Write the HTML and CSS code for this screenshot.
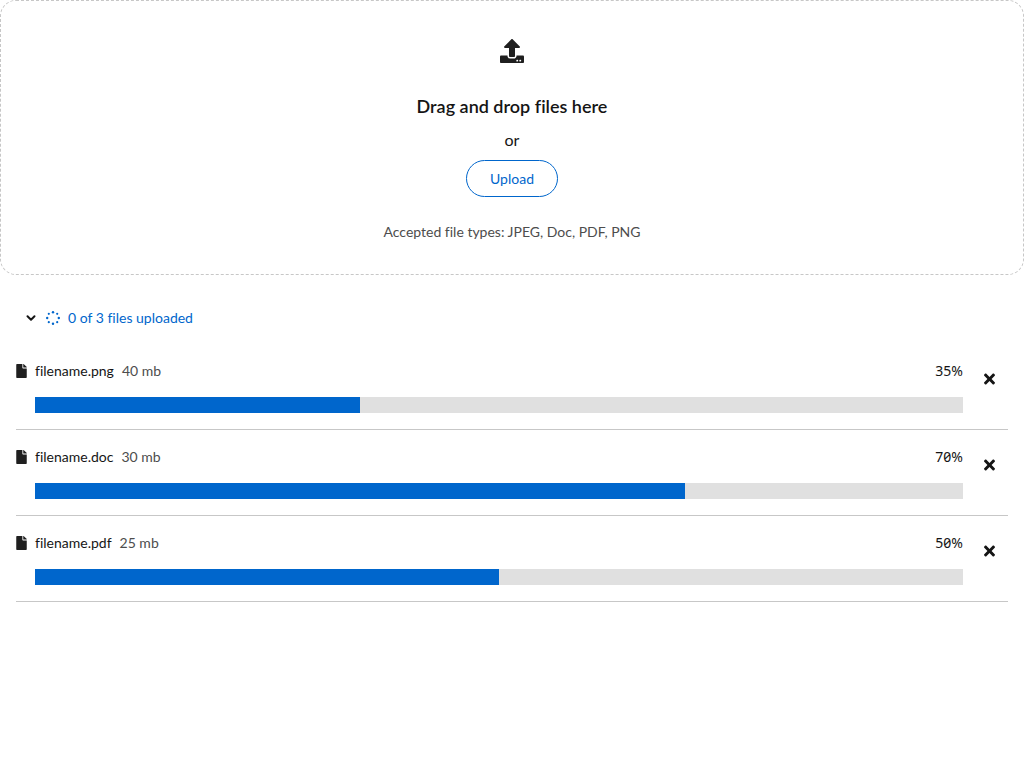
FILE: index.html
```html
<!DOCTYPE html>
<html lang="en">
<head>
<meta charset="utf-8">
<meta name="viewport" content="width=device-width, initial-scale=1">
<title>Multiple file upload</title>
<link rel="stylesheet" href="styles.css">
</head>
<body>
<svg class="sprite" aria-hidden="true">
  <symbol id="file" viewBox="0 0 384 512"><path d="M224 136V0H24C10.7 0 0 10.7 0 24v464c0 13.3 10.7 24 24 24h336c13.3 0 24-10.7 24-24V160H248c-13.2 0-24-10.8-24-24zm160-14.1v6.1H256V0h6.1c6.4 0 12.5 2.5 17 7l97.9 98c4.5 4.5 7 10.6 7 16.9z"/></symbol>
  <symbol id="times" viewBox="0 0 352 512"><path d="M242.72 256l100.07-100.07c12.28-12.28 12.28-32.19 0-44.48l-22.24-22.24c-12.28-12.28-32.19-12.28-44.48 0L176 189.28 75.93 89.21c-12.28-12.28-32.19-12.28-44.48 0L9.21 111.45c-12.28 12.28-12.28 32.19 0 44.48L109.28 256 9.21 356.07c-12.28 12.28-12.28 32.19 0 44.48l22.24 22.24c12.28 12.28 32.2 12.28 44.48 0L176 322.72l100.07 100.07c12.28 12.28 32.2 12.28 44.48 0l22.24-22.24c12.28-12.28 12.28-32.19 0-44.48L242.72 256z"/></symbol>
</svg>
<main>
  <section class="dropzone">
    <svg class="upload-icon" viewBox="0 0 512 512" aria-hidden="true"><path d="M296 384h-80c-13.3 0-24-10.7-24-24V192h-87.7c-17.8 0-26.7-21.5-14.1-34.1L242.3 5.7c7.5-7.5 19.8-7.5 27.3 0l152.2 152.2c12.6 12.6 3.7 34.1-14.1 34.1H320v168c0 13.3-10.7 24-24 24zm216-8v112c0 13.3-10.7 24-24 24H24c-13.3 0-24-10.7-24-24V376c0-13.3 10.7-24 24-24h136v8c0 30.9 25.1 56 56 56h80c30.9 0 56-25.1 56-56v-8h136c13.3 0 24 10.7 24 24zm-124 88c0-11-9-20-20-20s-20 9-20 20 9 20 20 20 20-9 20-20zm64 0c0-11-9-20-20-20s-20 9-20 20 9 20 20 20 20-9 20-20z"/></svg>
    <h1 class="title">Drag and drop files here</h1>
    <p class="separator">or</p>
    <button class="upload" type="button">Upload</button>
    <p class="hint">Accepted file types: JPEG, Doc, PDF, PNG</p>
  </section>
  <section class="status">
    <button class="toggle" type="button" aria-expanded="true">
      <svg class="chevron" viewBox="0 0 10 14" aria-hidden="true"><path d="M1.5 5.3 5 8.7l3.500-3.400"/></svg>
      <svg class="pending" viewBox="0 0 14 14" aria-hidden="true"><circle cx="7" cy="1.200" r="1.200"/><circle cx="11.200" cy="2.800" r="1.100"/><circle cx="12.800" cy="7" r="1.200"/><circle cx="11.200" cy="11.200" r="1.100"/><circle cx="7" cy="12.800" r="1.200"/><circle cx="2.800" cy="11.200" r="1.100"/><circle cx="1.200" cy="7" r="1.200"/><circle cx="2.800" cy="2.800" r="1.100"/></svg>
      <span>0 of 3 files uploaded</span>
    </button>
    <ul class="files">
      <li class="file">
        <svg class="file-icon" aria-hidden="true"><use href="#file"/></svg>
        <div class="file-main">
          <div class="file-header"><label class="name" for="p1">filename.png</label><span class="size">40 mb</span><span class="percent">35%</span></div>
          <progress class="bar" id="p1" max="100" value="35"></progress>
        </div>
        <button class="remove" type="button" aria-label="Remove filename.png"><svg class="times" aria-hidden="true"><use href="#times"/></svg></button>
      </li>
      <li class="file">
        <svg class="file-icon" aria-hidden="true"><use href="#file"/></svg>
        <div class="file-main">
          <div class="file-header"><label class="name" for="p2">filename.doc</label><span class="size">30 mb</span><span class="percent">70%</span></div>
          <progress class="bar" id="p2" max="100" value="70"></progress>
        </div>
        <button class="remove" type="button" aria-label="Remove filename.doc"><svg class="times" aria-hidden="true"><use href="#times"/></svg></button>
      </li>
      <li class="file">
        <svg class="file-icon" aria-hidden="true"><use href="#file"/></svg>
        <div class="file-main">
          <div class="file-header"><label class="name" for="p3">filename.pdf</label><span class="size">25 mb</span><span class="percent">50%</span></div>
          <progress class="bar" id="p3" max="100" value="50"></progress>
        </div>
        <button class="remove" type="button" aria-label="Remove filename.pdf"><svg class="times" aria-hidden="true"><use href="#times"/></svg></button>
      </li>
    </ul>
  </section>
</main>
</body>
</html>
```
FILE: styles.css
```css
* { box-sizing: border-box; }

body {
  margin: 0;
  background: #fff;
  color: #151515;
  font: 14px/21px Lato, "Noto Sans", sans-serif;
  font-variant-ligatures: none;
}

h1, p, ul { margin: 0; padding: 0; }
button { font: inherit; font-variant-ligatures: none; cursor: pointer; }
svg { fill: currentColor; flex: none; }
.sprite { position: absolute; width: 0; height: 0; }

.dropzone {
  display: flex;
  flex-direction: column;
  align-items: center;
  padding: 38px 32px 32px;
  border: 1px dashed #c7c7c7;
  border-radius: 16px;
  text-align: center;
}

.upload-icon { width: 24px; height: 24px; color: #1f1f1f; }
.title { margin-top: 32px; font-size: 18px; line-height: 23px; font-weight: 600; }
.separator { margin-top: 10px; font-size: 16px; line-height: 24px; }

.upload {
  margin-top: 8px;
  padding: 7px 23px;
  border: 1px solid #06c;
  border-radius: 20px;
  background: none;
  color: #06c;
}

.hint { margin-top: 24px; color: #4d4d4d; }

.status { padding: 24px 16px; }

.toggle {
  display: flex;
  align-items: center;
  gap: 8px;
  padding: 8px 10px;
  border: 0;
  background: none;
  color: #06c;
}

.chevron {
  width: 10px;
  height: 14px;
  margin-right: 2px;
  fill: none;
  stroke: #151515;
  stroke-width: 2;
  stroke-linecap: round;
  stroke-linejoin: round;
}
.pending { width: 14px; height: 14px; }

.files { margin-top: 8px; list-style: none; }

.file {
  display: flex;
  align-items: flex-start;
  gap: 8px;
  padding: 16px 0;
  border-bottom: 1px solid #c7c7c7;
}

.file-icon { width: 11px; height: 14px; margin-top: 4px; color: #1f1f1f; }
.file-main { flex: 1; min-width: 0; }
.file-header { display: flex; gap: 8px; }
.size { color: #4d4d4d; }
.percent { margin-left: auto; font-family: "Noto Sans", sans-serif; font-feature-settings: "tnum", "zero"; }

.bar {
  display: block;
  width: 100%;
  height: 16px;
  margin-top: 16px;
  border: 0;
  appearance: none;
  background: #e0e0e0;
}
.bar::-webkit-progress-bar { background: #e0e0e0; }
.bar::-webkit-progress-value { background: #06c; }
.bar::-moz-progress-bar { background: #06c; }

.remove {
  display: flex;
  align-items: center;
  justify-content: center;
  width: 37px;
  height: 37px;
  padding: 0;
  border: 0;
  background: none;
  color: #151515;
}
.times { width: 11px; height: 16px; }
```
